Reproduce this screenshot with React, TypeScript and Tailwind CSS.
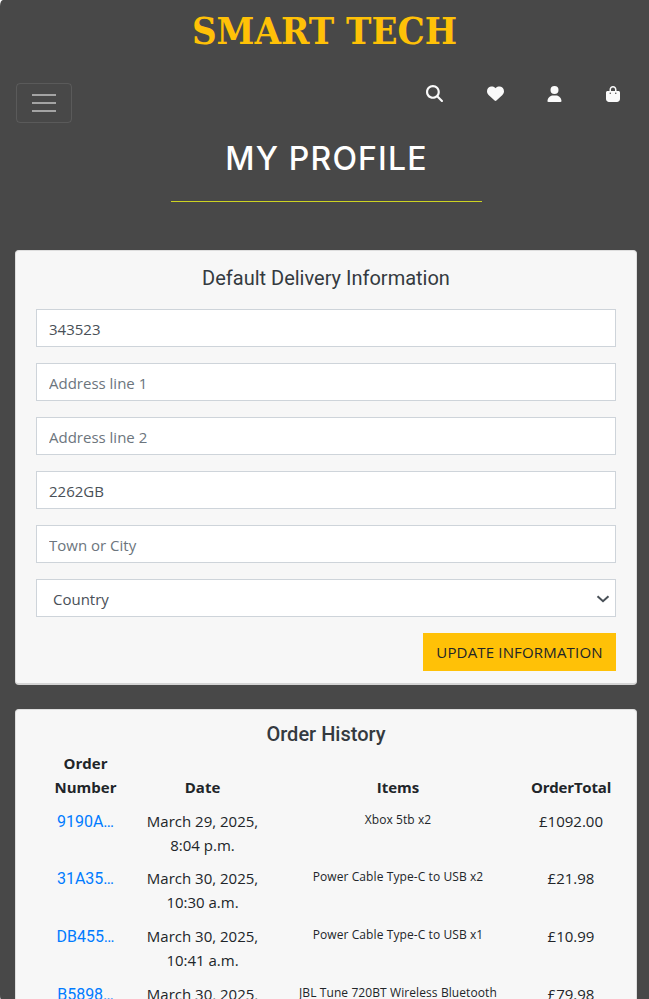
import type { ReactNode } from 'react';
import { FaBagShopping, FaHeart, FaMagnifyingGlass, FaUser } from 'react-icons/fa6';

const orders = [
  { id: '9190A…', day: 'March 29, 2025,', time: '8:04 p.m.', item: 'Xbox 5tb x2', total: '£1092.00' },
  { id: '31A35…', day: 'March 30, 2025,', time: '10:30 a.m.', item: 'Power Cable Type-C to USB x2', total: '£21.98' },
  { id: 'DB455…', day: 'March 30, 2025,', time: '10:41 a.m.', item: 'Power Cable Type-C to USB x1', total: '£10.99' },
  { id: 'B5898…', day: 'March 30, 2025,', time: '', item: 'JBL Tune 720BT Wireless Bluetooth', total: '£79.98' },
];

const fields = [
  { value: '343523', placeholder: 'Phone Number' },
  { value: '', placeholder: 'Address line 1' },
  { value: '', placeholder: 'Address line 2' },
  { value: '2262GB', placeholder: 'Postal Code' },
  { value: '', placeholder: 'Town or City' },
];

function Card({ children, className }: { children: ReactNode; className: string }) {
  return (
    <section className={`mx-[15px] w-[622px] rounded-[4px] border border-[#dedede] bg-[#f7f7f7] px-5 ${className}`}>
      {children}
    </section>
  );
}

export default function App() {
  return (
    <div className="h-[999px] w-full overflow-hidden bg-white font-['Open_Sans','Noto_Sans',sans-serif] text-[15px] leading-6 text-[#212529]">
      <div className="h-full rounded-tl-[3px_6px] rounded-bl-[1px_4px] bg-[#484848]">
        <header className="h-[123px]">
          <h1 className="h-[83px] pt-[7px] text-center font-['DejaVu_Serif_Condensed','DejaVu_Serif',serif] text-[38px] leading-[48px] font-bold whitespace-nowrap text-[#ffc107]">
            SMART TECH
          </h1>
          <div className="flex items-start justify-between pr-[29px] pl-4">
            <button className="flex h-10 w-14 flex-col items-center justify-center gap-1.5 rounded-[4px] border border-white/10">
              <span className="h-0.5 w-6 bg-[#a4a4a4]" />
              <span className="h-0.5 w-6 bg-[#a4a4a4]" />
              <span className="h-0.5 w-6 bg-[#a4a4a4]" />
            </button>
            <nav className="flex items-center pt-[2px] text-base text-[#fafafa]">
              <FaMagnifyingGlass className="mr-[44px] size-[17px]" />
              <FaHeart className="mr-[43px] size-[17px]" />
              <FaUser className="mr-[44px] h-4 w-[15px]" />
              <FaBagShopping className="h-4 w-[14px]" />
            </nav>
          </div>
        </header>

        <h2 className="mt-4 pl-[4px] text-center font-['Inter',sans-serif] text-[32px] leading-10 font-medium tracking-[1.15px] whitespace-nowrap text-white">
          MY PROFILE
        </h2>
        <hr className="mt-[22px] ml-[171px] w-[311px] border-t border-[#cdd322]" />

        <Card className="mt-12 h-[435px] border-b-2 border-b-[#d5d5d5] pt-[15px]">
          <h3 className="text-center font-['Roboto',sans-serif] text-xl leading-6 text-[#343a40]">
            Default Delivery Information
          </h3>
          <form className="mt-[19px] flex flex-col gap-4">
            {fields.map((f) => (
              <input
                key={f.placeholder}
                defaultValue={f.value}
                placeholder={f.placeholder}
                className="h-[38px] w-full border border-[#ced4da] bg-white px-3 pt-[2px] text-[15px] text-[#495057] placeholder:text-[#6c757d]"
              />
            ))}
            <div className="flex h-[38px] items-center justify-between border border-[#ced4da] bg-white pt-px pr-[5px] pl-4 text-[#495057]">
              Country
              <svg viewBox="0 0 14 10" className="h-[10px] w-[14px]" fill="none" stroke="#495057" strokeWidth="2">
                <path d="M1.5 2.2 7 7.2l5.5-5" />
              </svg>
            </div>
            <button
              type="button"
              className="h-[38px] w-[193px] self-end bg-[#ffc107] text-center tracking-[0.17px] whitespace-nowrap text-[#212529]"
            >
              UPDATE INFORMATION
            </button>
          </form>
        </Card>

        <Card className="mt-6 h-[290px] overflow-hidden rounded-b-none border-b-0 pt-3">
          <h3 className="text-center font-['Roboto',sans-serif] text-xl leading-6 font-medium text-[#343a40]">
            Order History
          </h3>
          <table className="mt-[0.4px] w-[580px] table-fixed text-center [&_td]:p-0 [&_td]:py-[4.8px] [&_td]:align-top">
            <colgroup>
              <col className="w-[99px]" />
              <col className="w-[135px]" />
              <col className="w-[256px]" />
              <col className="w-[90px]" />
            </colgroup>
            <thead>
              <tr className="align-bottom [&_th]:p-0 [&_th]:py-[4.8px] [&_th]:font-bold">
                <th>
                  Order
                  <br />
                  Number
                </th>
                <th>Date</th>
                <th>Items</th>
                <th className="tracking-[-0.2px]">OrderTotal</th>
              </tr>
            </thead>
            <tbody>
              {orders.map((o) => (
                <tr key={o.id}>
                  <td className="font-['Roboto',sans-serif] text-base text-[#007bff]">
                    <a className="block pt-px leading-6">{o.id}</a>
                  </td>
                  <td>
                    {o.day}
                    <br />
                    {o.time}
                  </td>
                  <td>
                    <div className="text-xs leading-[21px] tracking-[0.09px]">{o.item}</div>
                  </td>
                  <td>{o.total}</td>
                </tr>
              ))}
            </tbody>
          </table>
        </Card>
      </div>
    </div>
  );
}
